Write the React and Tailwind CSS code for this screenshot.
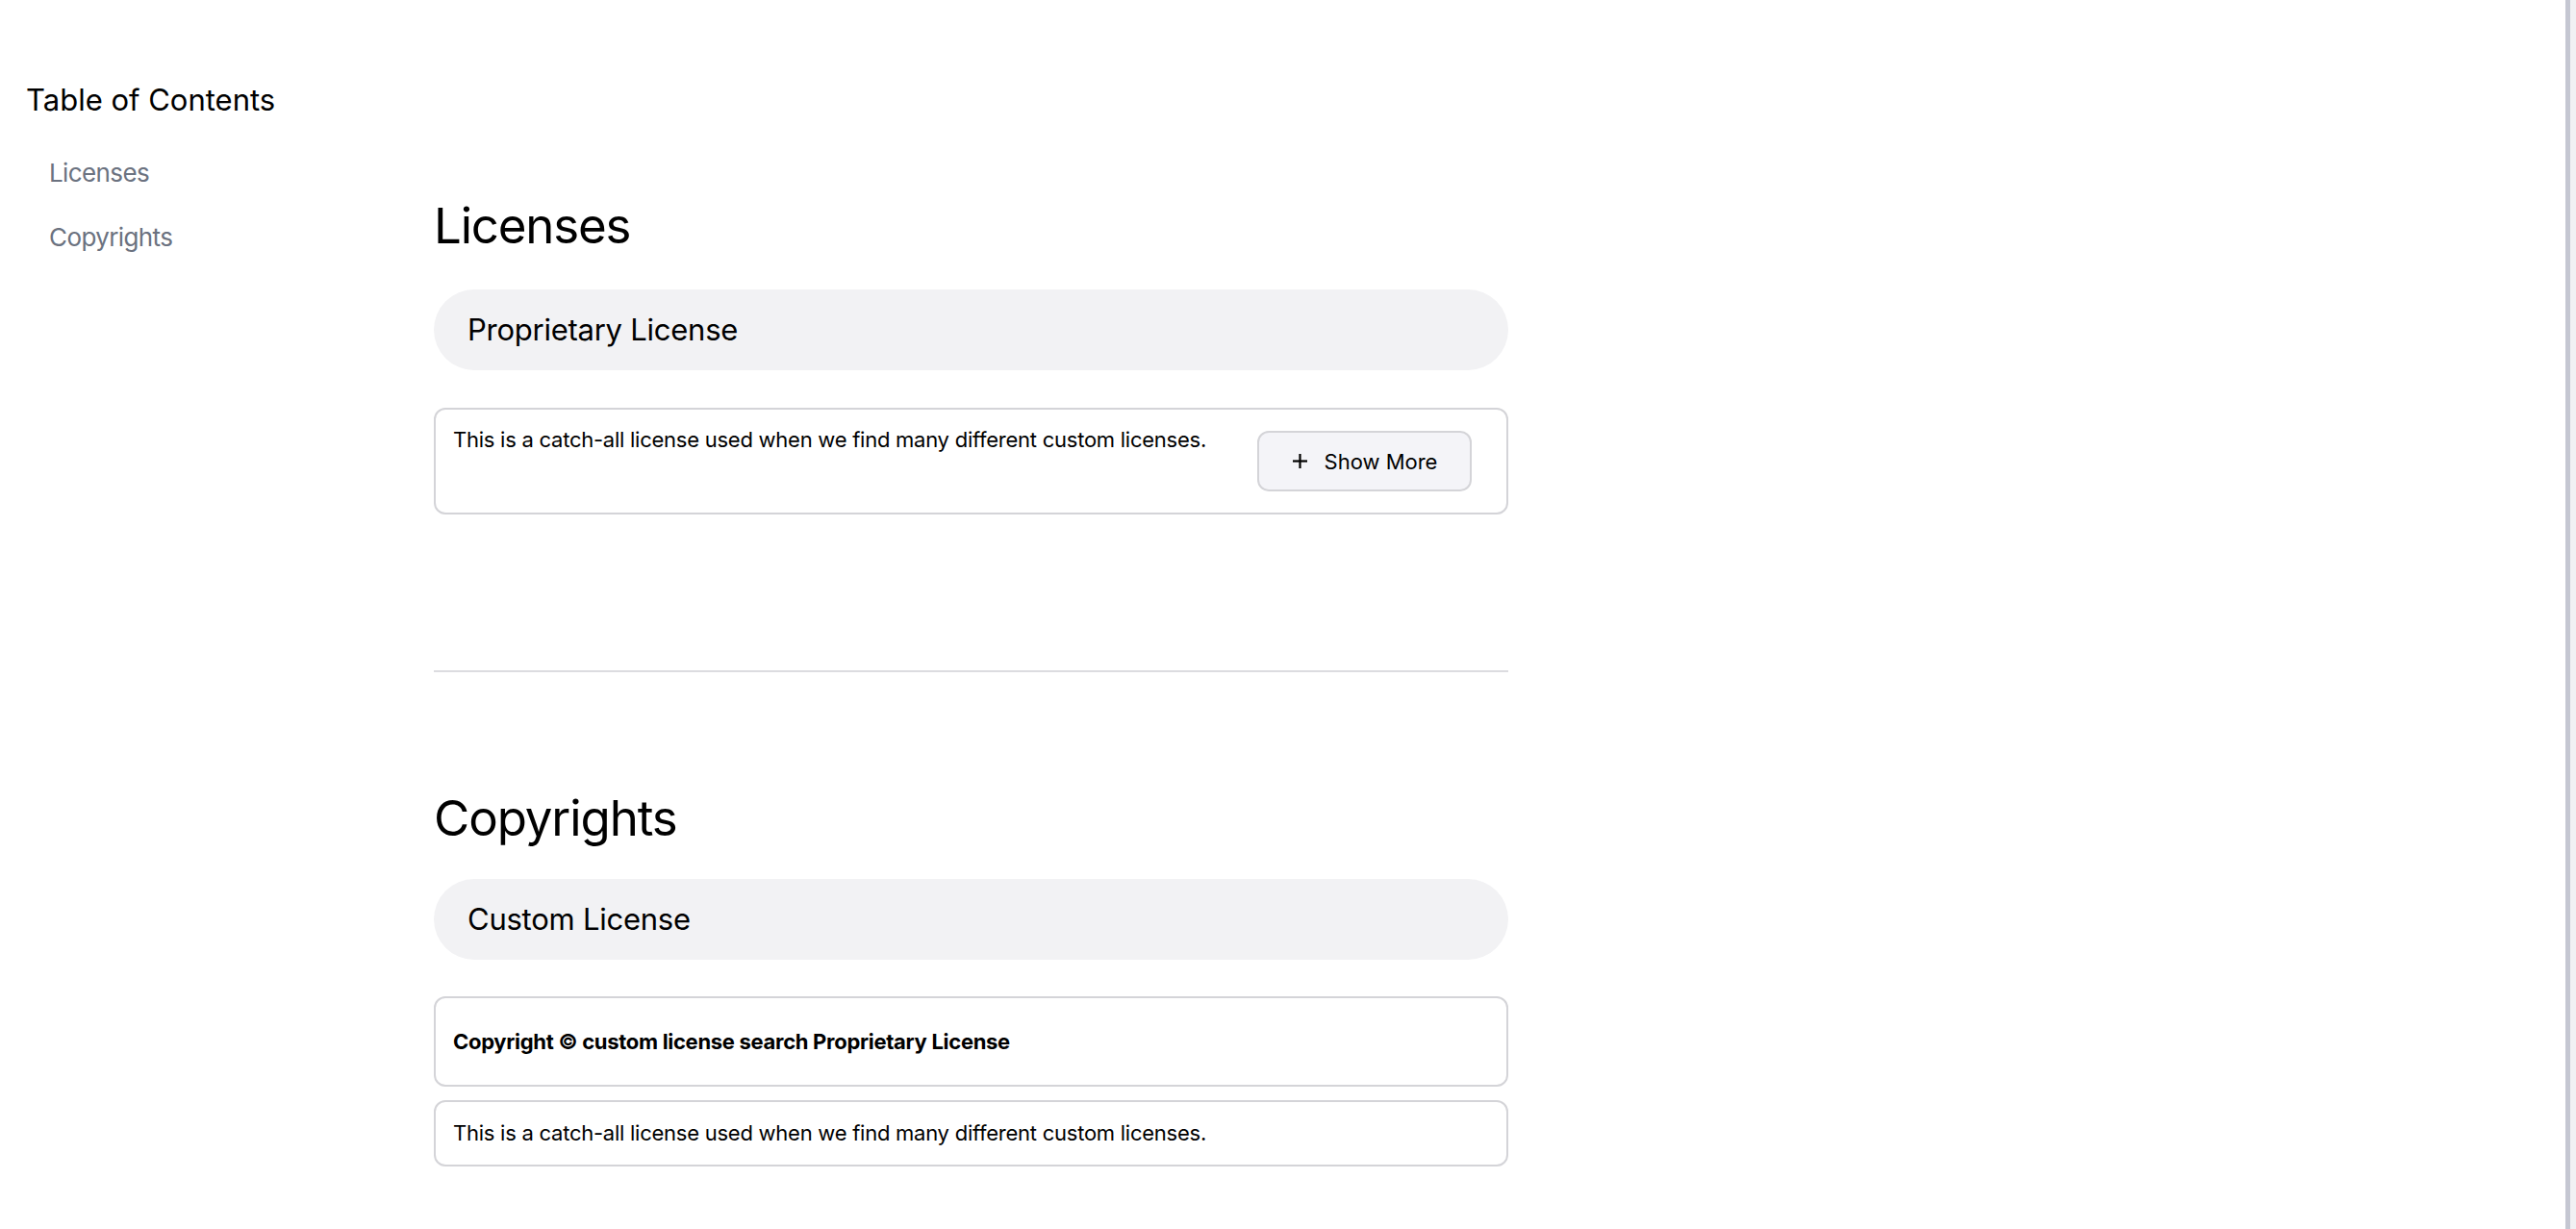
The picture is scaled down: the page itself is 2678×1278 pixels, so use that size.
export default function App() {
  return (
    <div className="flex min-h-screen w-full bg-white text-black" style={{ fontFamily: "Inter, 'Noto Sans', sans-serif" }}>
      <div className="flex flex-1">
        <aside className="w-[451px] shrink-0 pl-[27px] pt-[82px]">
          <div className="text-[31px] leading-[43px] font-normal">Table of Contents</div>
          <nav className="mt-[37px] flex flex-col gap-[31px] pl-[24px]">
            <a className="text-[26px] leading-[36px] tracking-[-0.6px] text-[#6b7280]">Licenses</a>
            <a className="text-[26px] leading-[36px] tracking-[-0.6px] text-[#6b7280]">Copyrights</a>
          </nav>
        </aside>
        <main className="w-[1117px] shrink-0 pt-[204px] pb-[60px]">
          <section>
            <h1 className="text-[51px] leading-[61px] font-normal tracking-[-1.2px]">Licenses</h1>
            <div className="mt-[36px] flex h-[84px] items-center rounded-full bg-[#f2f2f4] px-[35px]">
              <span className="text-[31px] leading-[40px] tracking-[-0.25px]">Proprietary License</span>
            </div>
            <div className="mt-[39px] flex items-start justify-between rounded-[12px] border-2 border-[#d4d4d8] py-[15px] pl-[18px] pr-[15px]">
              <p className="text-[22px] leading-[32px] tracking-[-0.25px]">This is a catch-all license used when we find many different custom licenses.</p>
              <button className="my-[7px] mr-[21px] flex h-[63px] w-[223px] shrink-0 items-center justify-center gap-[17px] rounded-[12px] border-2 border-[#d4d4d8] bg-[#f4f4f8]">
                <svg width="17" height="17" viewBox="0 0 17 17" fill="none" stroke="black" strokeWidth="2.2">
                  <line x1="8.5" y1="1" x2="8.5" y2="16" />
                  <line x1="1" y1="8.5" x2="16" y2="8.5" />
                </svg>
                <span className="text-[22px] leading-[30px]">Show More</span>
              </button>
            </div>
          </section>
          <hr className="mt-[162px] border-0 border-t-2 border-[#dcdce0]" />
          <section className="mt-[121px]">
            <h1 className="text-[51px] leading-[61px] font-normal tracking-[-1.1px]">Copyrights</h1>
            <div className="mt-[33px] flex h-[84px] items-center rounded-full bg-[#f2f2f4] px-[35px]">
              <span className="text-[31px] leading-[40px] tracking-[-0.25px]">Custom License</span>
            </div>
            <div className="mt-[38px] flex flex-col gap-[14px]">
              <div className="rounded-[12px] border-2 border-[#d4d4d8] py-[29px] pl-[18px] pr-[18px]">
                <p className="text-[22px] leading-[32px] font-bold tracking-[-0.3px]">Copyright © custom license search Proprietary License</p>
              </div>
              <div className="rounded-[12px] border-2 border-[#d4d4d8] pt-[16px] pb-[17px] pl-[18px] pr-[18px]">
                <p className="text-[22px] leading-[32px] tracking-[-0.25px]">This is a catch-all license used when we find many different custom licenses.</p>
              </div>
            </div>
          </section>
        </main>
      </div>
      <div className="flex w-[11px] shrink-0">
        <div className="w-[5px] bg-[#c5c7d2]"></div>
        <div className="w-[6px] bg-[#f1f1f3]"></div>
      </div>
    </div>
  );
}
